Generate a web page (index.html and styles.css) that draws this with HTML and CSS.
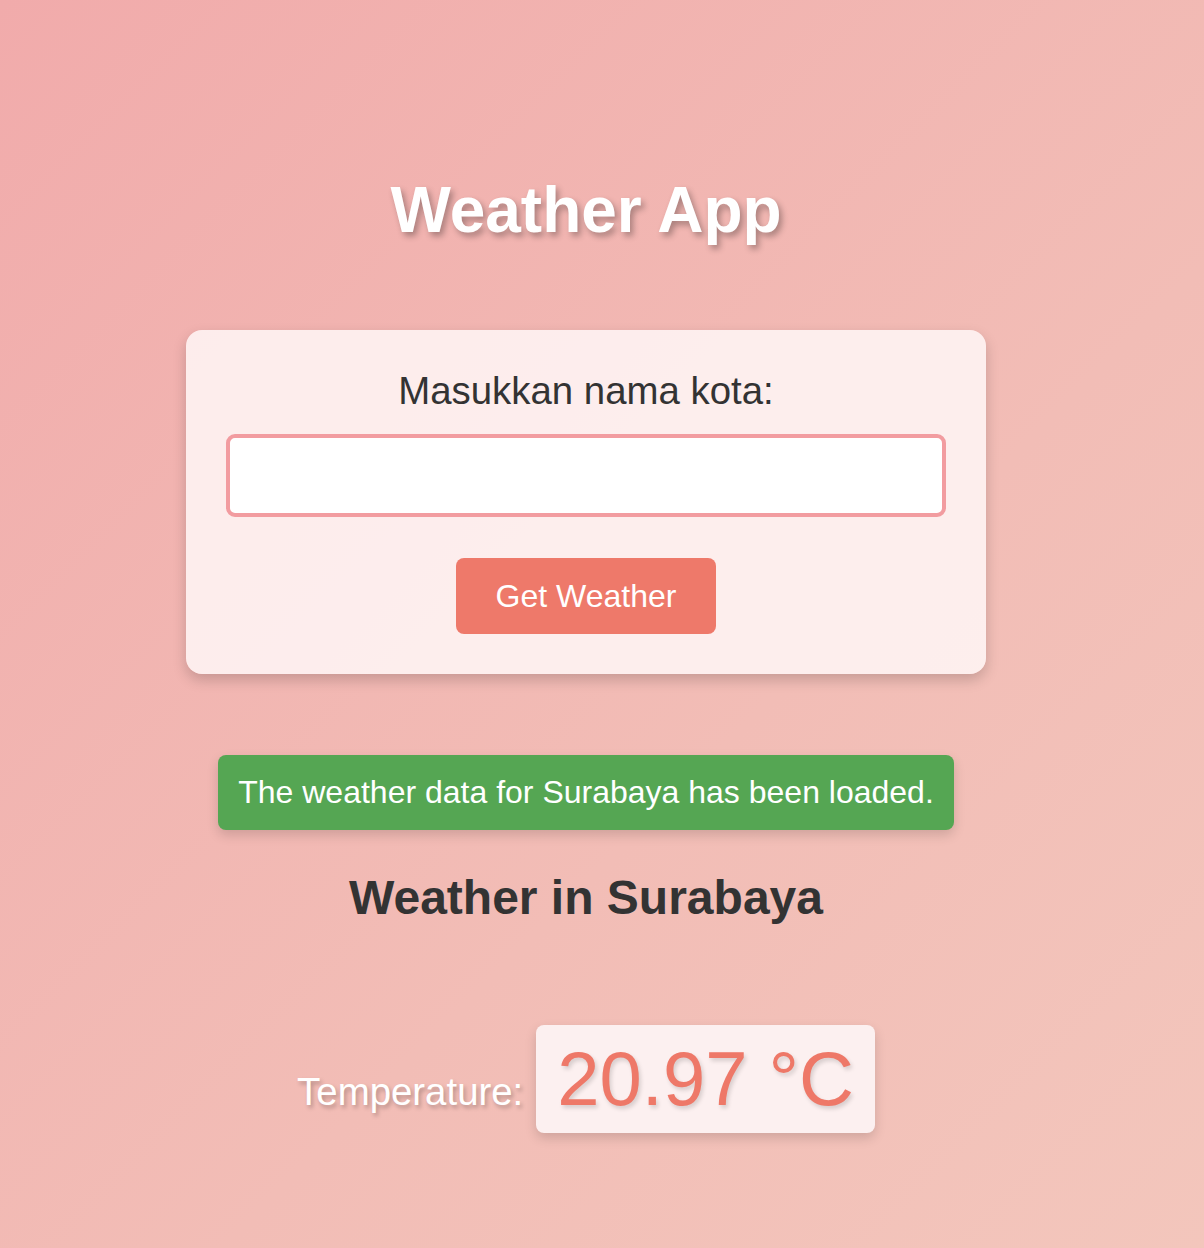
FILE: index.html
```html
<!DOCTYPE html>
<html lang="id">
<head>
<meta charset="utf-8">
<title>Weather App</title>
<link rel="stylesheet" href="styles.css">
</head>
<body>
<main class="app">
  <h1 class="title">Weather App</h1>
  <form class="card">
    <label class="card-label" for="city">Masukkan nama kota:</label>
    <input class="city-input" id="city" type="text">
    <button class="btn" type="button">Get Weather</button>
  </form>
  <div class="alert">The weather data for Surabaya has been loaded.</div>
  <h2 class="result-title">Weather in Surabaya</h2>
  <div class="temp-row">
    <span class="temp-label">Temperature:</span>
    <span class="temp-value">20.97 °C</span>
  </div>
</main>
</body>
</html>
```
FILE: styles.css
```css
html, body {
  margin: 0;
  padding: 0;
}
body {
  min-height: 100vh;
  background: linear-gradient(135deg, #f1abab 0%, #f2bdb6 60%, #f3c6bc 100%);
  font-family: "Liberation Sans", Arial, Helvetica, sans-serif;
  color: #333;
}
.app {
  width: 1172px;
  display: flex;
  flex-direction: column;
  align-items: center;
  padding-top: 173px;
  padding-bottom: 60px;
}
.title {
  margin: 0;
  font-size: 64px;
  line-height: 74px;
  font-weight: bold;
  color: #fff;
  text-shadow: 3px 4px 6px rgba(0, 0, 0, 0.3);
}
.card {
  margin-top: 83px;
  width: 800px;
  box-sizing: border-box;
  padding: 40px;
  background: rgba(255, 247, 247, 0.85);
  border-radius: 16px;
  box-shadow: 0 6px 14px rgba(0, 0, 0, 0.18);
  display: flex;
  flex-direction: column;
  align-items: center;
}
.card-label {
  font-size: 38.4px;
  line-height: 42px;
  color: #333;
}
.city-input {
  margin-top: 22px;
  width: 100%;
  height: 83px;
  box-sizing: border-box;
  border: 4px solid #f29ca0;
  border-radius: 9px;
  background: #fff;
  font-family: inherit;
  font-size: 32px;
  padding: 0 16px;
  outline: none;
}
.btn {
  margin-top: 41px;
  padding: 20px 40px;
  font-family: inherit;
  font-size: 32px;
  line-height: 36px;
  color: #fff;
  background: #ee796a;
  border: none;
  border-radius: 8px;
}
.alert {
  margin-top: 81px;
  padding: 19px 20px;
  font-size: 32px;
  line-height: 37px;
  color: #fff;
  background: #55a653;
  border-radius: 8px;
  box-shadow: 0 5px 12px rgba(0, 0, 0, 0.15);
}
.result-title {
  margin: 40px 0 0;
  font-size: 48px;
  line-height: 55px;
  font-weight: bold;
  color: #333;
}
.temp-row {
  margin-top: 100px;
  display: flex;
  align-items: baseline;
  gap: 13px;
}
.temp-label {
  font-size: 38.4px;
  color: #fff;
  text-shadow: 2px 3px 4px rgba(0, 0, 0, 0.25);
}
.temp-value {
  padding: 10px 21px;
  font-size: 76px;
  line-height: 88px;
  color: #ee7868;
  background: #fcf0f0;
  border-radius: 8px;
  box-shadow: 0 5px 12px rgba(0, 0, 0, 0.15);
  text-shadow: 2px 3px 4px rgba(0, 0, 0, 0.15);
}
```
